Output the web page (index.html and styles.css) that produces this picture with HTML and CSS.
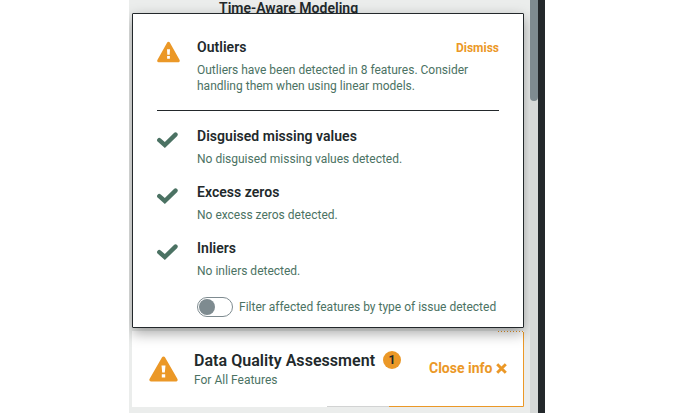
FILE: index.html
```html
<!DOCTYPE html>
<html lang="en">
<head>
<meta charset="utf-8">
<title>Data Quality Assessment</title>
<link rel="stylesheet" href="styles.css">
</head>
<body>
<div class="window">
  <main class="content">
    <h1 class="section-title">Time-Aware Modeling</h1>
    <section class="popup">
      <div class="row row-first">
        <svg class="icon warn" viewBox="0 0 24 22"><path d="M11.5 2.2 21.3 19.8H1.7Z" fill="#eb9827" stroke="#eb9827" stroke-width="3" stroke-linejoin="round"/><path d="M10 8.2h3l-.3 5.5h-2.4zM10.1 15h2.8v2.8h-2.8z" fill="#fff"/></svg>
        <div class="row-text">
          <div class="row-head"><h2>Outliers</h2><span class="dismiss">Dismiss</span></div>
          <p>Outliers have been detected in 8 features. Consider<br>handling them when using linear models.</p>
        </div>
      </div>
      <hr class="divider">
      <div class="row">
        <svg class="icon check" viewBox="0 0 21 16"><path d="M2.3 8.2 7.8 13 18.5 2.6" fill="none" stroke="#4b7263" stroke-width="4.4" stroke-linecap="round"/></svg>
        <div class="row-text"><h2>Disguised missing values</h2><p>No disguised missing values detected.</p></div>
      </div>
      <div class="row">
        <svg class="icon check" viewBox="0 0 21 16"><path d="M2.3 8.2 7.8 13 18.5 2.6" fill="none" stroke="#4b7263" stroke-width="4.4" stroke-linecap="round"/></svg>
        <div class="row-text"><h2>Excess zeros</h2><p>No excess zeros detected.</p></div>
      </div>
      <div class="row">
        <svg class="icon check" viewBox="0 0 21 16"><path d="M2.3 8.2 7.8 13 18.5 2.6" fill="none" stroke="#4b7263" stroke-width="4.4" stroke-linecap="round"/></svg>
        <div class="row-text"><h2>Inliers</h2><p>No inliers detected.</p></div>
      </div>
      <div class="filter"><span class="toggle"><span class="knob"></span></span><span class="filter-label">Filter affected features by type of issue detected</span></div>
    </section>
    <section class="card">
      <svg class="card-warn" viewBox="0 0 31 28"><path d="M15.5 3.2 28 24.8H3Z" fill="#eb9827" stroke="#eb9827" stroke-width="3.4" stroke-linejoin="round"/><path d="M13.5 10.5h4l-.7 7h-2.6zM13.8 19.2h3.4v3.4h-3.4z" fill="#fff"/></svg>
      <div class="card-text">
        <div class="card-head"><h2>Data Quality Assessment</h2><span class="badge">1</span></div>
        <p>For All Features</p>
      </div>
      <div class="close"><span>Close info</span><svg class="x" viewBox="0 0 11 11"><path d="M1.2 1.2l8.6 8.6M9.8 1.2l-8.6 8.6" stroke="#eb9827" stroke-width="2.9"/></svg></div>
      <svg class="trace" viewBox="0 0 392 76"><path d="M391.5 1V75.5H257" fill="none" stroke="#eb9827"/><path d="M366 .5H391" stroke="#eb9827" stroke-dasharray="1 2"/><path d="M195 75.5H257" stroke="#d2d3d3"/></svg>
    </section>
  </main>
  <div class="scroll"><div class="thumb"></div></div>
</div>
</body>
</html>
```

FILE: styles.css
```css
* { box-sizing: border-box; }
body { margin: 0; width: 673px; height: 413px; overflow: hidden; background: #fff; font-family: Roboto, sans-serif; color: #22292b; }
h1, h2, p { margin: 0; }
svg { display: block; flex: none; }
.window { display: flex; width: 416px; height: 413px; margin-left: 129px; background: #ebedec; border-right: 7px solid #23282b; }
.content { width: 401px; padding: 0 6px 0 3px; overflow: hidden; background: #ebedec; }
.section-title { height: 13px; padding-left: 87px; font-size: 14px; line-height: 16px; font-weight: 600; letter-spacing: .03px; white-space: nowrap; }
.popup { position: relative; z-index: 1; width: 392px; height: 315px; padding: 24px 24px 0; background: #fff; border: 1px solid #23282b; border-radius: 1px; box-shadow: 0 5px 14px rgba(0, 0, 0, .36); }
.row { display: flex; height: 56px; }
.row-first { height: 72px; }
.row-text { flex: 1; white-space: nowrap; }
.icon { margin-right: 16px; }
.warn { width: 24px; height: 22px; margin-top: 3px; }
.check { width: 21px; height: 16px; margin: 6px 19px 0 0; }
.row h2 { font-size: 14px; line-height: 20px; font-weight: 600; letter-spacing: .03px; }
.row p { font-size: 12px; line-height: 16px; color: #4b7263; margin-top: 5px; }
.row-first h2 { line-height: 18px; }
.row-first p { margin-top: 4px; }
.row-head { display: flex; justify-content: space-between; height: 20px; }
.dismiss { font-size: 12px; line-height: 20px; font-weight: 700; color: #eb9827; }
.divider { height: 1px; margin: 0 0 15px; border: 0; background: #23282b; }
.filter { display: flex; align-items: center; gap: 6px; height: 20px; margin: 3px 0 0 40px; }
.toggle { display: flex; align-items: center; width: 36px; height: 20px; padding-left: 1px; border: 1px solid #7e8b90; border-radius: 10px; flex: none; }
.knob { width: 16px; height: 16px; border-radius: 50%; background: #7e8b90; }
.filter-label { font-size: 12px; color: #4b7263; white-space: nowrap; }
.card { position: relative; display: flex; width: 392px; height: 76px; margin-top: 3px; padding-left: 16px; background: #fff; }
.card-warn { width: 31px; height: 28px; margin-top: 24px; }
.card-text { margin: 20px 0 0 15px; width: 235px; white-space: nowrap; }
.card-head { display: flex; gap: 8px; height: 20px; }
.card h2 { font-size: 16px; line-height: 20px; font-weight: 600; letter-spacing: .04px; }
.badge { width: 18px; height: 18px; border-radius: 50%; background: #eb9827; font-size: 12px; line-height: 18px; font-weight: 700; text-align: center; }
.card p { font-size: 12px; line-height: 16px; margin-top: 1px; color: #4b7263; }
.close { display: flex; align-items: center; gap: 4px; height: 20px; margin-top: 27px; font-size: 14px; font-weight: 700; color: #eb9827; white-space: nowrap; }
.x { width: 11px; height: 11px; margin-top: 1px; }
.trace { position: absolute; left: 0; top: 0; width: 392px; height: 76px; }
.scroll { width: 8px; background: #d6d9d8; }
.thumb { height: 101px; border-radius: 0 0 4px 4px; background: #7e8b90; }
```
